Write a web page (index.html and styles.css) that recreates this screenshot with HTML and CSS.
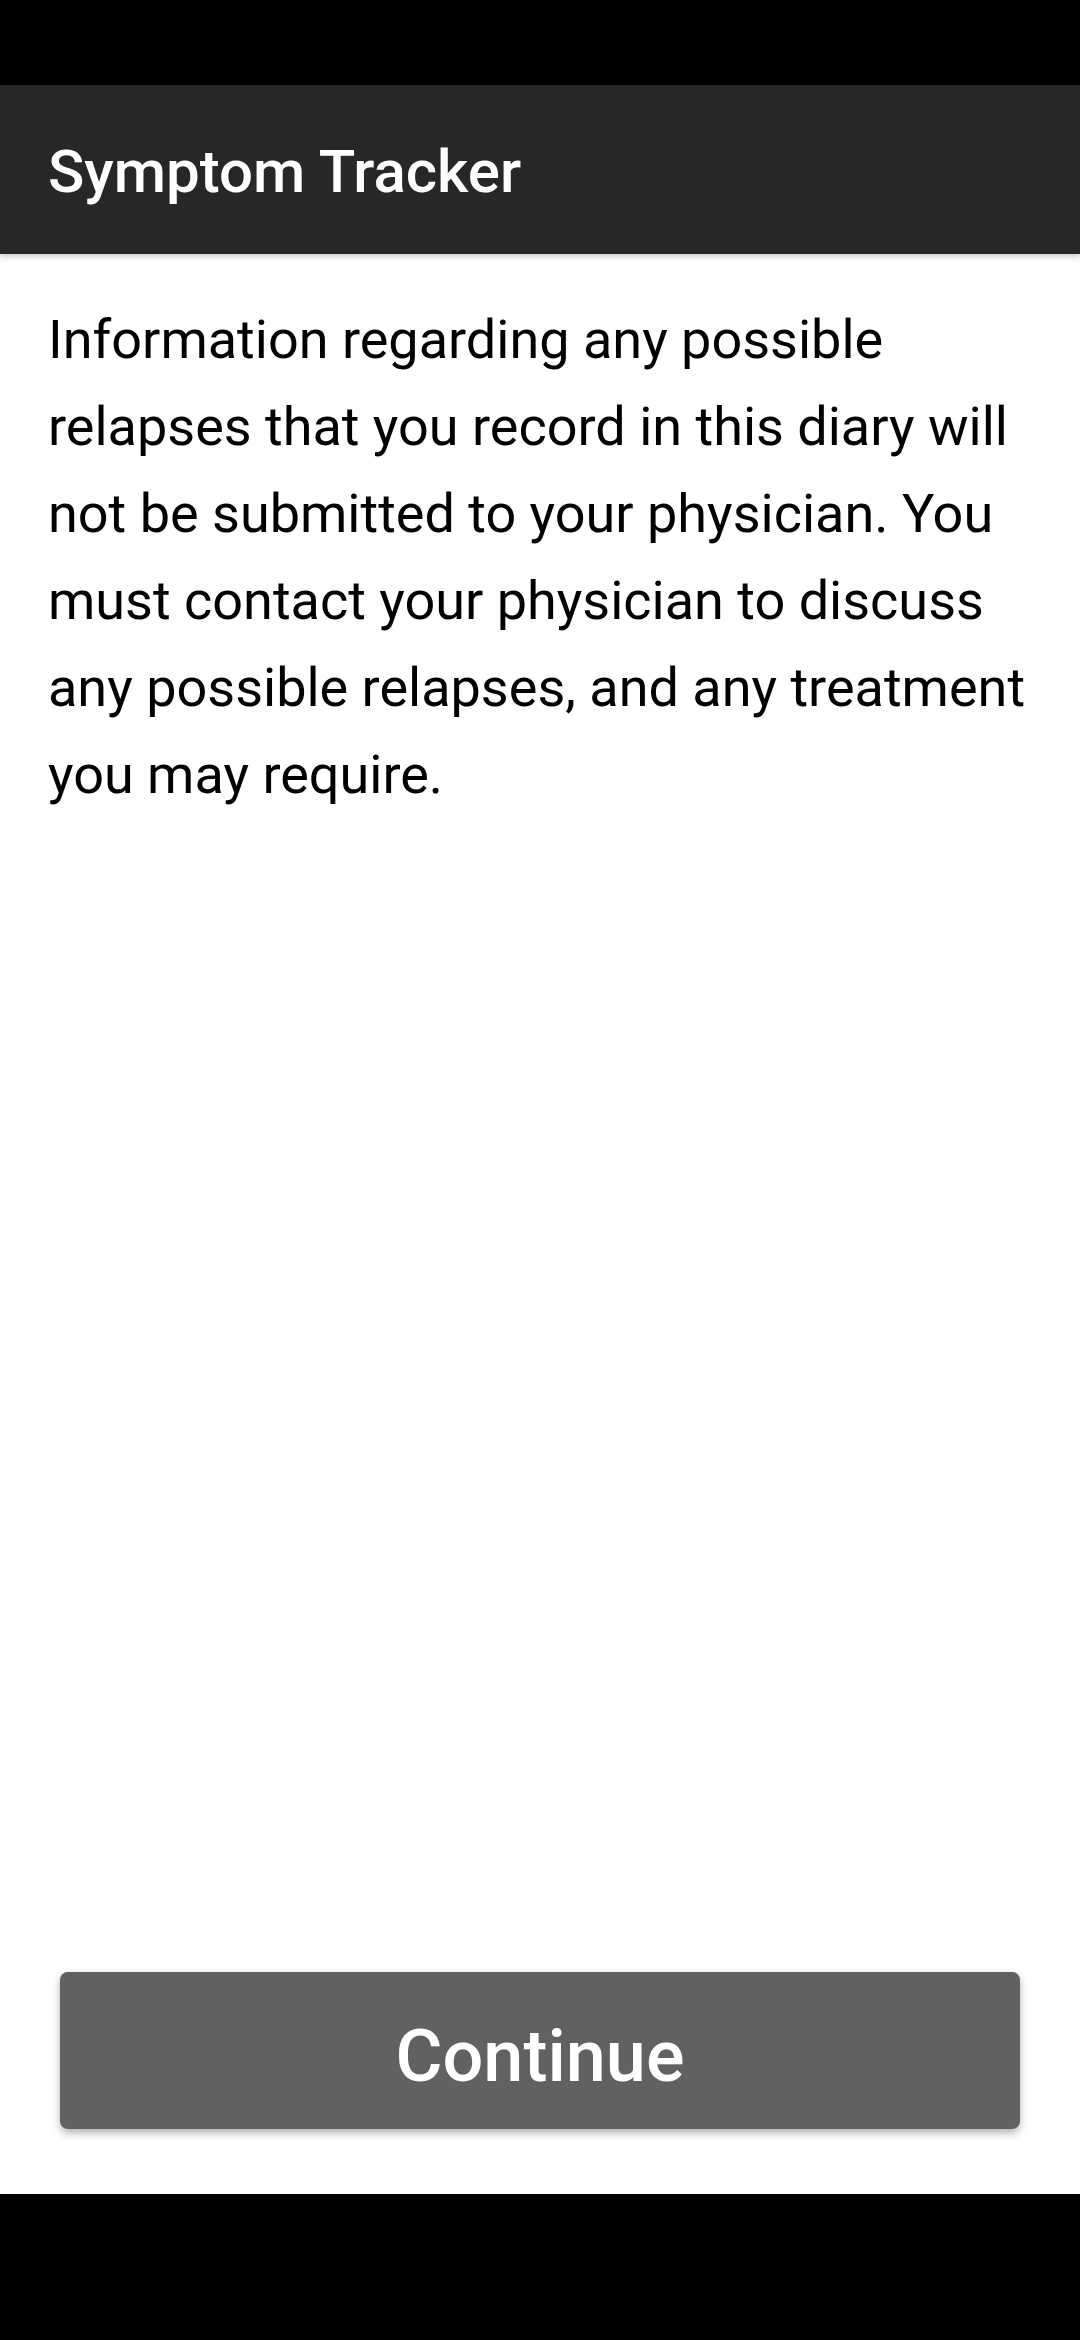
FILE: index.html
```html
<!DOCTYPE html>
<html>
<head>
<meta charset="utf-8">
<link rel="stylesheet" href="styles.css">
</head>
<body>
<div class="screen">
  <div class="status-bar"></div>
  <header class="app-bar"><h1 class="title">Symptom Tracker</h1></header>
  <main class="content">
    <p class="notice">Information regarding any possible relapses that you record in this diary will not be submitted to your physician. You must contact your physician to discuss any possible relapses, and any treatment you may require.</p>
  </main>
  <div class="actions"><button class="btn">Continue</button></div>
  <div class="nav-bar"></div>
</div>
</body>
</html>
```
FILE: styles.css
```css
html, body { margin: 0; padding: 0; }
body { width: 1080px; height: 2340px; font-family: Roboto, "Noto Sans", sans-serif; background: #fff; }
.screen { display: flex; flex-direction: column; height: 2340px; }
.status-bar { height: 85px; background: #000; flex: none; }
.app-bar { height: 169px; box-sizing: border-box; padding-top: 4px; background: #272727; flex: none; display: flex; align-items: center; padding-left: 48px; box-shadow: 0 2px 6px rgba(0,0,0,0.25); position: relative; z-index: 1; }
.title { margin: 0; color: #fff; font-size: 60px; font-weight: 500; }
.content { flex: 1; padding: 42px 36px 0 48px; }
.notice { margin: 0; font-size: 54px; line-height: 87px; color: #000; }
.actions { padding: 0 60px 65px 60px; flex: none; }
.btn { width: 100%; height: 157px; padding: 12px 0 0 0; border: none; border-radius: 8px; background: #616161; color: #fff; font-family: Roboto, sans-serif; font-size: 72px; font-weight: 500; box-shadow: 0 4px 8px rgba(0,0,0,0.3); display: block; }
.nav-bar { height: 146px; background: #000; flex: none; }
```
